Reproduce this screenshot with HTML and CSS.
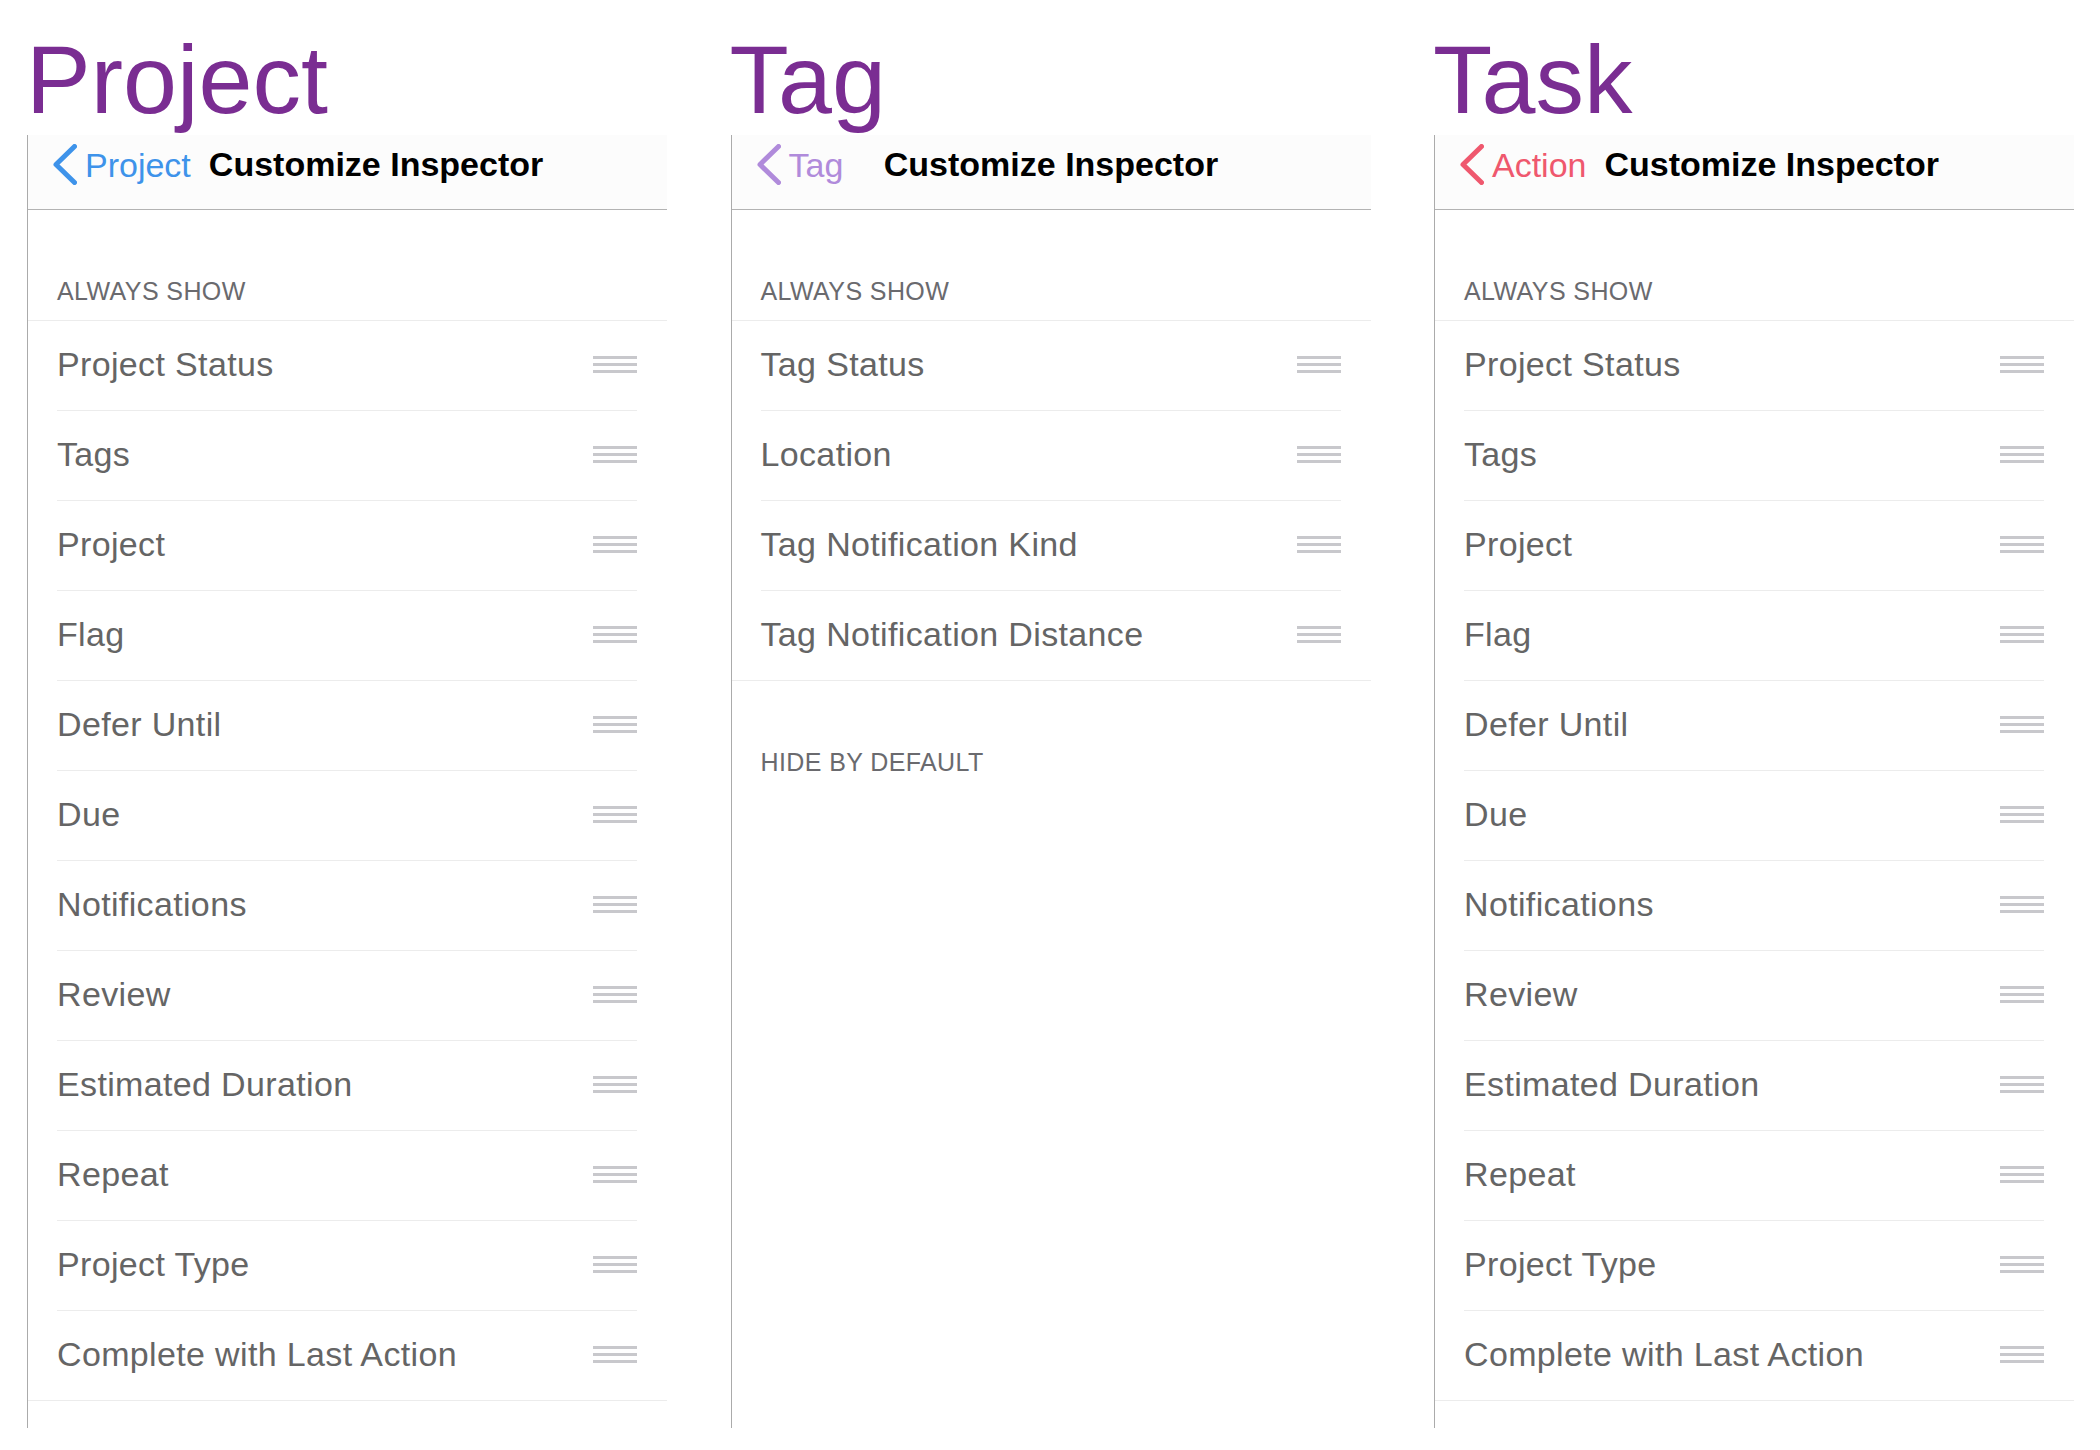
FILE: index.html
```html
<!DOCTYPE html>
<html lang="en">
<head>
<meta charset="utf-8">
<title>Customize Inspector</title>
<link rel="stylesheet" href="styles.css">
</head>
<body>
<div class="page">

  <section class="col">
    <h1 class="big-title">Project</h1>
    <div class="panel">
      <div class="nav">
        <div class="back back-blue">
          <svg class="chev" viewBox="0 0 24 41" width="24" height="41"><polyline points="21.5,2.5 3,20.5 21.5,38.5" /></svg>
          <span>Project</span>
        </div>
        <div class="nav-title">Customize Inspector</div>
        <div></div>
      </div>
      <div class="sec-head">ALWAYS SHOW</div>
      <ul class="list">
        <li class="row"><div class="row-in"><span class="label">Project Status</span><span class="handle"><i></i><i></i><i></i></span></div></li>
        <li class="row"><div class="row-in"><span class="label">Tags</span><span class="handle"><i></i><i></i><i></i></span></div></li>
        <li class="row"><div class="row-in"><span class="label">Project</span><span class="handle"><i></i><i></i><i></i></span></div></li>
        <li class="row"><div class="row-in"><span class="label">Flag</span><span class="handle"><i></i><i></i><i></i></span></div></li>
        <li class="row"><div class="row-in"><span class="label">Defer Until</span><span class="handle"><i></i><i></i><i></i></span></div></li>
        <li class="row"><div class="row-in"><span class="label">Due</span><span class="handle"><i></i><i></i><i></i></span></div></li>
        <li class="row"><div class="row-in"><span class="label">Notifications</span><span class="handle"><i></i><i></i><i></i></span></div></li>
        <li class="row"><div class="row-in"><span class="label">Review</span><span class="handle"><i></i><i></i><i></i></span></div></li>
        <li class="row"><div class="row-in"><span class="label">Estimated Duration</span><span class="handle"><i></i><i></i><i></i></span></div></li>
        <li class="row"><div class="row-in"><span class="label">Repeat</span><span class="handle"><i></i><i></i><i></i></span></div></li>
        <li class="row"><div class="row-in"><span class="label">Project Type</span><span class="handle"><i></i><i></i><i></i></span></div></li>
        <li class="row"><div class="row-in"><span class="label">Complete with Last Action</span><span class="handle"><i></i><i></i><i></i></span></div></li>
      </ul>
    </div>
  </section>

  <section class="col">
    <h1 class="big-title">Tag</h1>
    <div class="panel">
      <div class="nav">
        <div class="back back-purple">
          <svg class="chev" viewBox="0 0 24 41" width="24" height="41"><polyline points="21.5,2.5 3,20.5 21.5,38.5" /></svg>
          <span>Tag</span>
        </div>
        <div class="nav-title">Customize Inspector</div>
        <div></div>
      </div>
      <div class="sec-head">ALWAYS SHOW</div>
      <ul class="list">
        <li class="row"><div class="row-in"><span class="label">Tag Status</span><span class="handle"><i></i><i></i><i></i></span></div></li>
        <li class="row"><div class="row-in"><span class="label">Location</span><span class="handle"><i></i><i></i><i></i></span></div></li>
        <li class="row"><div class="row-in"><span class="label">Tag Notification Kind</span><span class="handle"><i></i><i></i><i></i></span></div></li>
        <li class="row"><div class="row-in"><span class="label">Tag Notification Distance</span><span class="handle"><i></i><i></i><i></i></span></div></li>
      </ul>
      <div class="sec-head">HIDE BY DEFAULT</div>
    </div>
  </section>

  <section class="col">
    <h1 class="big-title">Task</h1>
    <div class="panel">
      <div class="nav">
        <div class="back back-red">
          <svg class="chev" viewBox="0 0 24 41" width="24" height="41"><polyline points="21.5,2.5 3,20.5 21.5,38.5" /></svg>
          <span>Action</span>
        </div>
        <div class="nav-title">Customize Inspector</div>
        <div></div>
      </div>
      <div class="sec-head">ALWAYS SHOW</div>
      <ul class="list">
        <li class="row"><div class="row-in"><span class="label">Project Status</span><span class="handle"><i></i><i></i><i></i></span></div></li>
        <li class="row"><div class="row-in"><span class="label">Tags</span><span class="handle"><i></i><i></i><i></i></span></div></li>
        <li class="row"><div class="row-in"><span class="label">Project</span><span class="handle"><i></i><i></i><i></i></span></div></li>
        <li class="row"><div class="row-in"><span class="label">Flag</span><span class="handle"><i></i><i></i><i></i></span></div></li>
        <li class="row"><div class="row-in"><span class="label">Defer Until</span><span class="handle"><i></i><i></i><i></i></span></div></li>
        <li class="row"><div class="row-in"><span class="label">Due</span><span class="handle"><i></i><i></i><i></i></span></div></li>
        <li class="row"><div class="row-in"><span class="label">Notifications</span><span class="handle"><i></i><i></i><i></i></span></div></li>
        <li class="row"><div class="row-in"><span class="label">Review</span><span class="handle"><i></i><i></i><i></i></span></div></li>
        <li class="row"><div class="row-in"><span class="label">Estimated Duration</span><span class="handle"><i></i><i></i><i></i></span></div></li>
        <li class="row"><div class="row-in"><span class="label">Repeat</span><span class="handle"><i></i><i></i><i></i></span></div></li>
        <li class="row"><div class="row-in"><span class="label">Project Type</span><span class="handle"><i></i><i></i><i></i></span></div></li>
        <li class="row"><div class="row-in"><span class="label">Complete with Last Action</span><span class="handle"><i></i><i></i><i></i></span></div></li>
      </ul>
    </div>
  </section>

</div>
</body>
</html>
```

FILE: styles.css
```css
* { box-sizing: border-box; }

html, body {
  margin: 0;
  padding: 0;
  background: #ffffff;
}

body {
  font-family: "Liberation Sans", Arial, sans-serif;
  color: #666666;
}

.page {
  display: grid;
  grid-template-columns: repeat(3, 640px);
  column-gap: 63.5px;
  padding: 31px 0 0 27px;
}

.col {
  display: flex;
  flex-direction: column;
}

.big-title {
  margin: 0 0 7px -1px;
  font-size: 97px;
  line-height: 97px;
  font-weight: 400;
  color: #7a2d92;
  white-space: nowrap;
}

.panel {
  height: 1293px;
  border-left: 1px solid #ababab;
}

/* navigation bar */
.nav {
  height: 75px;
  background: #fcfcfc;
  border-bottom: 1px solid #b3b3b3;
  padding: 9px 25px 0 25px;
  display: grid;
  grid-template-columns: 1fr auto 1fr;
  column-gap: 18px;
  align-items: start;
}

.back {
  display: flex;
  align-items: center;
  gap: 8px;
  white-space: nowrap;
  font-size: 34px;
  line-height: 40px;
}

.chev {
  display: block;
  flex: none;
  fill: none;
  stroke: currentColor;
  stroke-width: 5;
  stroke-linecap: round;
  stroke-linejoin: round;
}

.back-blue { color: #3e93ea; }
.back-purple { color: #b08bdb; }
.back-red { color: #ef586e; }

.nav-title {
  font-size: 34px;
  line-height: 40px;
  font-weight: 700;
  color: #000000;
  white-space: nowrap;
}

/* section header */
.sec-head {
  padding: 65px 0 13px 29px;
  font-size: 25px;
  line-height: 32px;
  letter-spacing: 0.4px;
  color: #6a6a6e;
  white-space: nowrap;
}

/* list */
.list {
  list-style: none;
  margin: 0;
  padding: 0;
  border-top: 1px solid #ececec;
  border-bottom: 1px solid #ececec;
}

.row {
  padding: 0 30px 0 29px;
}

.row-in {
  height: 90px;
  padding-bottom: 4px;
  display: flex;
  align-items: center;
  justify-content: space-between;
  border-bottom: 1px solid #ececec;
}

.row:last-child .row-in {
  height: 89px;
  border-bottom: none;
}

.label {
  font-size: 34px;
  line-height: 40px;
  letter-spacing: 0.35px;
  color: #656565;
  white-space: nowrap;
}

.handle {
  display: flex;
  flex-direction: column;
  gap: 4px;
  width: 44px;
  margin-top: 2px;
}

.handle i {
  display: block;
  height: 3px;
  background: #c8c8cc;
}
```
